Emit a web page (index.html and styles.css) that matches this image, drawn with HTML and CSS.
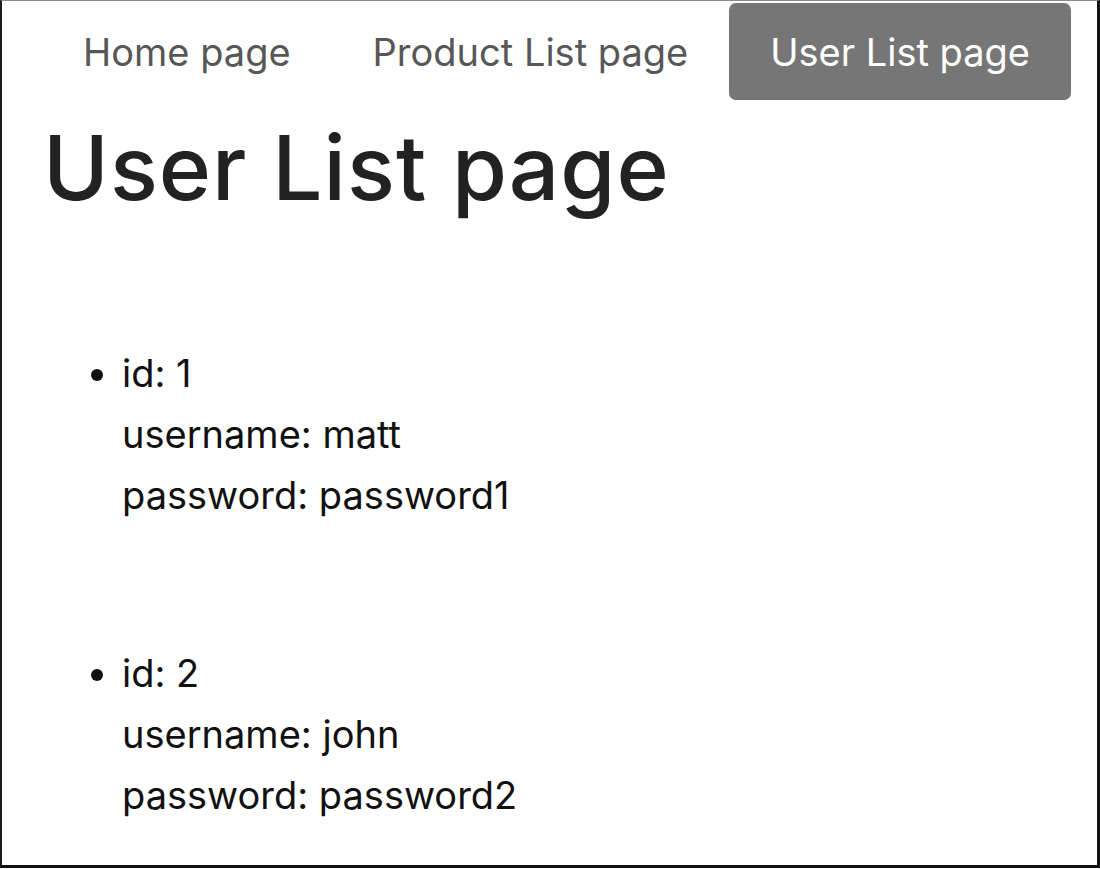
FILE: index.html
```html
<!DOCTYPE html>
<html lang="en">
<head>
<meta charset="utf-8">
<title>User List page</title>
<link rel="stylesheet" href="styles.css">
</head>
<body>
<div class="frame">
  <nav class="nav">
    <a class="nav-link" href="#">Home page</a>
    <a class="nav-link" href="#">Product List page</a>
    <a class="nav-link active" href="#">User List page</a>
  </nav>
  <h1 class="title">User List page</h1>
  <ul class="users">
    <li class="user">
      <div>id: 1</div>
      <div>username: matt</div>
      <div>password: password1</div>
    </li>
    <li class="user">
      <div>id: 2</div>
      <div>username: john</div>
      <div>password: password2</div>
    </li>
  </ul>
</div>
</body>
</html>
```

FILE: styles.css
```css
html, body {
  margin: 0;
  padding: 0;
  background: #fff;
}
body {
  font-family: Inter, "Noto Sans", "Liberation Sans", sans-serif;
  color: #222;
}
.frame {
  box-sizing: border-box;
  width: 1100px;
  height: 868px;
  border-top: 1px solid #8a8a8a;
  border-left: 2px solid #1a1a1a;
  border-right: 3px solid #111;
  border-bottom: 3px solid #111;
  padding: 2px 0 0 40px;
}
.nav {
  display: flex;
  height: 97px;
}
.nav-link {
  display: flex;
  align-items: center;
  padding: 0 41px;
  font-size: 38px;
  color: #575757;
  text-decoration: none;
  border-radius: 7px;
}
.nav-link.active {
  background: #767676;
  color: #fff;
}
.title {
  margin: 15px 0 0 1px;
  font-size: 89px;
  font-weight: 500;
  line-height: 1.2;
  color: #222;
  letter-spacing: 1px;
}
.users {
  margin: 121px 0 0 0;
  padding: 0 0 0 80px;
  font-size: 38px;
  line-height: 61px;
  color: #111;
}
.user + .user {
  margin-top: 117px;
}
```
